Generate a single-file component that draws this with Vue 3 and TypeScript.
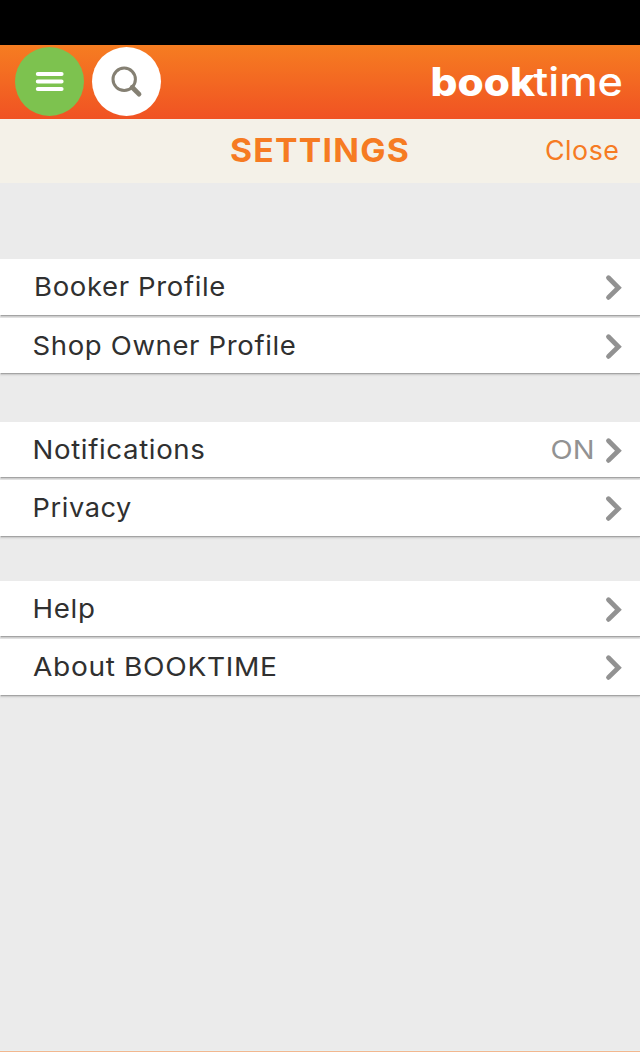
<script setup lang="ts">
interface Item { label: string; x: number; width: number; value?: string }
interface Group { name: string; items: Item[] }

const groups: Group[] = [
  { name: 'profiles', items: [
    { label: 'Booker Profile', x: 34, width: 192 },
    { label: 'Shop Owner Profile', x: 32.5, width: 264 },
  ] },
  { name: 'preferences', items: [
    { label: 'Notifications', x: 32.5, width: 173, value: 'ON' },
    { label: 'Privacy', x: 32.5, width: 99.5 },
  ] },
  { name: 'info', items: [
    { label: 'Help', x: 32.5, width: 63 },
    { label: 'About BOOKTIME', x: 33, width: 244.5 },
  ] },
]
</script>

<template>
  <div class="screen">
    <div class="status"></div>
    <header class="topbar">
      <button class="round menu" aria-label="Menu">
        <svg width="69" height="69" viewBox="0 0 69 69">
          <path d="M22.8 27H46.6M22.8 34.5H46.6M22.8 42H46.6" fill="none" stroke="#fff" stroke-width="4" stroke-linecap="round" />
        </svg>
      </button>
      <button class="round search" aria-label="Search">
        <svg width="69" height="69" viewBox="0 0 69 69">
          <circle cx="32.2" cy="32.3" r="11.2" fill="none" stroke="#858073" stroke-width="3" />
          <path d="M40.2 40.3L47 47.1" stroke="#858073" stroke-width="4.8" stroke-linecap="round" />
        </svg>
      </button>
      <svg class="logo" width="200" height="74" viewBox="0 0 200 74">
        <text class="bold" x="0.5" y="51" textLength="104.5" lengthAdjust="spacingAndGlyphs">book</text>
        <text class="light" x="103.5" y="51" textLength="89.5" lengthAdjust="spacingAndGlyphs">time</text>
      </svg>
    </header>
    <div class="titlebar">
      <svg width="640" height="63" viewBox="0 0 640 63">
        <text class="title" x="230" y="43" textLength="180" lengthAdjust="spacingAndGlyphs">SETTINGS</text>
        <text class="close" x="545" y="40.5" textLength="74.5" lengthAdjust="spacingAndGlyphs">Close</text>
      </svg>
    </div>
    <main>
      <section v-for="g in groups" :key="g.name" :class="['group', g.name]">
        <div v-for="item in g.items" :key="item.label" class="row">
          <svg width="640" height="55" viewBox="0 0 640 55">
            <text class="label" :x="item.x" y="37.4" :textLength="item.width" lengthAdjust="spacingAndGlyphs">{{ item.label }}</text>
            <text v-if="item.value" class="value" x="550.5" y="37.4" textLength="44" lengthAdjust="spacingAndGlyphs">{{ item.value }}</text>
            <path d="M608.5 18.8L618.4 28.7L608.5 38.4" class="chevron" />
          </svg>
        </div>
      </section>
    </main>
    <footer class="edge"></footer>
  </div>
</template>

<style>
body { margin: 0; background: #ebebeb; }
</style>
<style scoped>
.screen { width: 640px; height: 1052px; display: flex; flex-direction: column; overflow: hidden; background: #ebebeb; font-family: Inter, "Liberation Sans", sans-serif; }
svg { display: block; }
.status { height: 45px; background: #000; }
.topbar { height: 74px; display: flex; align-items: flex-start; padding-left: 15px; box-sizing: border-box; background: linear-gradient(#f67d21, #f05223); }
.round { width: 69px; height: 69px; margin: 2px 8px 0 0; padding: 0; border: 0; border-radius: 50%; }
.menu { background: #7dc24f; }
.search { background: #fff; }
.logo { margin-left: auto; margin-right: 10px; }
.logo text { fill: #fff; font-size: 39px; }
.logo .bold { font-weight: 800; }
.logo .light { font-weight: 500; }
.titlebar { height: 63.5px; background: #f4f1e8; }
.title { font-size: 33px; font-weight: 700; fill: #f67b22; letter-spacing: 1.2px; }
.close { font-size: 26.5px; fill: #f67b22; letter-spacing: 0.5px; }
.group { display: flex; flex-direction: column; gap: 3px; }
.profiles { margin-top: 76.5px; }
.preferences { margin-top: 48.5px; }
.info { margin-top: 45.2px; }
.row { height: 55.5px; background: #fff; box-shadow: 1px 1px 1px #a4a4a4, 0 2px 2px #ccc; }
.label { font-size: 26px; font-weight: 400; fill: #303030; letter-spacing: 0.6px; }
.value { font-size: 26px; fill: #929292; }
.chevron { fill: none; stroke: #929292; stroke-width: 4.8; stroke-linecap: round; stroke-linejoin: miter; }
.edge { height: 1px; margin-top: auto; border-top: 1px solid #e8f1f2; background: #f2b78f; }
</style>
